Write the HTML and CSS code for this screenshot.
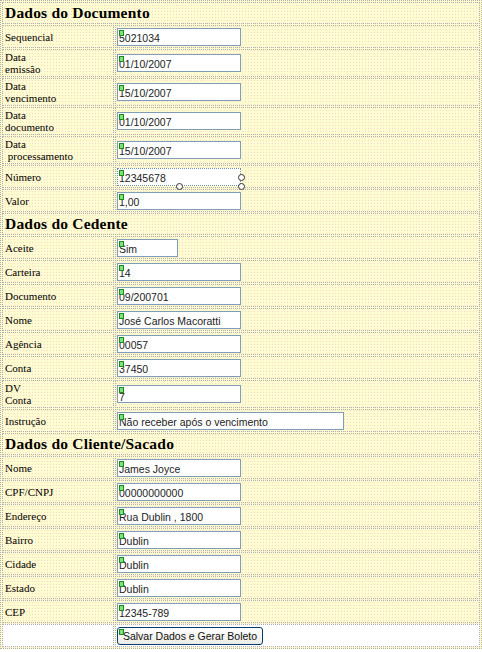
FILE: index.html
```html
<!DOCTYPE html>
<html lang="pt-BR">
<head>
  <meta charset="UTF-8">
  <title>Boleto - Dados</title>
  <link rel="stylesheet" href="styles.css">
</head>
<body>
  <table class="form">
    <tr><td colspan="2" class="sec">Dados do Documento</td></tr>
    <tr><td class="lbl">Sequencial</td><td class="fld"><span class="ctl"><i class="tag"></i><input class="txt" value="5021034"></span></td></tr>
    <tr><td class="lbl">Data<br>emissão</td><td class="fld"><span class="ctl"><i class="tag"></i><input class="txt" value="01/10/2007"></span></td></tr>
    <tr><td class="lbl">Data<br>vencimento</td><td class="fld"><span class="ctl"><i class="tag"></i><input class="txt" value="15/10/2007"></span></td></tr>
    <tr><td class="lbl">Data<br>documento</td><td class="fld"><span class="ctl"><i class="tag"></i><input class="txt" value="01/10/2007"></span></td></tr>
    <tr><td class="lbl">Data<br>&nbsp;processamento</td><td class="fld"><span class="ctl"><i class="tag"></i><input class="txt" value="15/10/2007"></span></td></tr>
    <tr><td class="lbl">Número</td><td class="fld"><span class="ctl selected"><i class="tag"></i><input class="txt" value="12345678"><b class="grip right"></b><b class="grip bottom"></b><b class="grip corner"></b></span></td></tr>
    <tr><td class="lbl">Valor</td><td class="fld"><span class="ctl"><i class="tag"></i><input class="txt" value="1,00"></span></td></tr>

    <tr><td colspan="2" class="sec">Dados do Cedente</td></tr>
    <tr><td class="lbl">Aceite</td><td class="fld"><span class="ctl"><i class="tag"></i><input class="txt short" value="Sim"></span></td></tr>
    <tr><td class="lbl">Carteira</td><td class="fld"><span class="ctl"><i class="tag"></i><input class="txt" value="14"></span></td></tr>
    <tr><td class="lbl">Documento</td><td class="fld"><span class="ctl"><i class="tag"></i><input class="txt" value="09/200701"></span></td></tr>
    <tr><td class="lbl">Nome</td><td class="fld"><span class="ctl"><i class="tag"></i><input class="txt" value="José Carlos Macoratti"></span></td></tr>
    <tr><td class="lbl">Agência</td><td class="fld"><span class="ctl"><i class="tag"></i><input class="txt" value="00057"></span></td></tr>
    <tr><td class="lbl">Conta</td><td class="fld"><span class="ctl"><i class="tag"></i><input class="txt" value="37450"></span></td></tr>
    <tr><td class="lbl">DV<br>Conta</td><td class="fld"><span class="ctl"><i class="tag"></i><input class="txt low" value="7"></span></td></tr>
    <tr><td class="lbl">Instrução</td><td class="fld"><span class="ctl"><i class="tag"></i><input class="txt long" value="Não receber após o vencimento"></span></td></tr>

    <tr><td colspan="2" class="sec">Dados do Cliente/Sacado</td></tr>
    <tr><td class="lbl">Nome</td><td class="fld"><span class="ctl"><i class="tag"></i><input class="txt" value="James Joyce"></span></td></tr>
    <tr><td class="lbl">CPF/CNPJ</td><td class="fld"><span class="ctl"><i class="tag"></i><input class="txt" value="00000000000"></span></td></tr>
    <tr><td class="lbl">Endereço</td><td class="fld"><span class="ctl"><i class="tag"></i><input class="txt" value="Rua Dublin , 1800"></span></td></tr>
    <tr><td class="lbl">Bairro</td><td class="fld"><span class="ctl"><i class="tag"></i><input class="txt" value="Dublin"></span></td></tr>
    <tr><td class="lbl">Cidade</td><td class="fld"><span class="ctl"><i class="tag"></i><input class="txt" value="Dublin"></span></td></tr>
    <tr><td class="lbl">Estado</td><td class="fld"><span class="ctl"><i class="tag"></i><input class="txt" value="Dublin"></span></td></tr>
    <tr><td class="lbl">CEP</td><td class="fld"><span class="ctl"><i class="tag"></i><input class="txt" value="12345-789"></span></td></tr>
    <tr class="actions"><td class="lbl"></td><td class="fld"><span class="ctl"><i class="tag"></i><button class="btn">Salvar Dados e Gerar Boleto</button></span></td></tr>
  </table>
</body>
</html>
```

FILE: styles.css
```css
body {
  margin: 0;
  background: #fff;
  font-family: "Liberation Serif", serif;
  color: #000;
}
.form {
  width: 482px;
  border: 1px dotted #b0b0b0;
  border-spacing: 1px;
  background-color: #fffccf;
  background-image: radial-gradient(circle, #f6d6d2 0.6px, transparent 0.8px);
  background-size: 3px 3px;
}
.form td {
  border: 1px dotted #b0b0b0;
  padding: 1px 2px;
  vertical-align: middle;
}
.sec {
  font-weight: bold;
  font-size: 15.5px;
  line-height: 18px;
  height: 18px;
  letter-spacing: 0.2px;
}
.lbl {
  width: 106px;
  font-size: 11px;
  line-height: 12px;
  height: 19px;
}
.form .fld {
  padding: 1px;
  font-size: 0;
  line-height: 0;
}
.ctl {
  position: relative;
  display: inline-block;
  vertical-align: middle;
}
.tag {
  position: absolute;
  left: 2px;
  top: 2px;
  width: 3px;
  height: 4px;
  border: 1px solid #1a8a1a;
  background: #7fe07f;
  z-index: 2;
}
.txt {
  display: block;
  box-sizing: border-box;
  width: 124px;
  height: 18px;
  margin: 0;
  padding: 2px 1px 0;
  border: 1px solid #7f9db9;
  background: #fff;
  font-family: "Liberation Sans", Arial, sans-serif;
  font-size: 10.5px;
  line-height: 14px;
  color: #222;
}
.txt.short { width: 61px; }
.txt.long { width: 227px; }
.txt.low { padding-top: 5px; }
.selected .txt {
  border: 1px dotted #6f8fa8;
}
.grip {
  position: absolute;
  width: 5px;
  height: 5px;
  border: 1px solid #333;
  border-radius: 50%;
  background: #fff;
}
.grip.right { right: -4px; top: 6px; }
.grip.bottom { left: 59px; bottom: -4px; }
.grip.corner { right: -4px; bottom: -4px; }
.actions td {
  background: #fff;
}
.btn {
  display: block;
  width: 146px;
  height: 18px;
  margin: 0;
  padding: 0;
  border: 1px solid #003c74;
  border-radius: 3px;
  background: linear-gradient(#ffffff, #ecebe4);
  font-family: "Liberation Sans", Arial, sans-serif;
  font-size: 10.5px;
  color: #111;
  text-align: center;
}
```
